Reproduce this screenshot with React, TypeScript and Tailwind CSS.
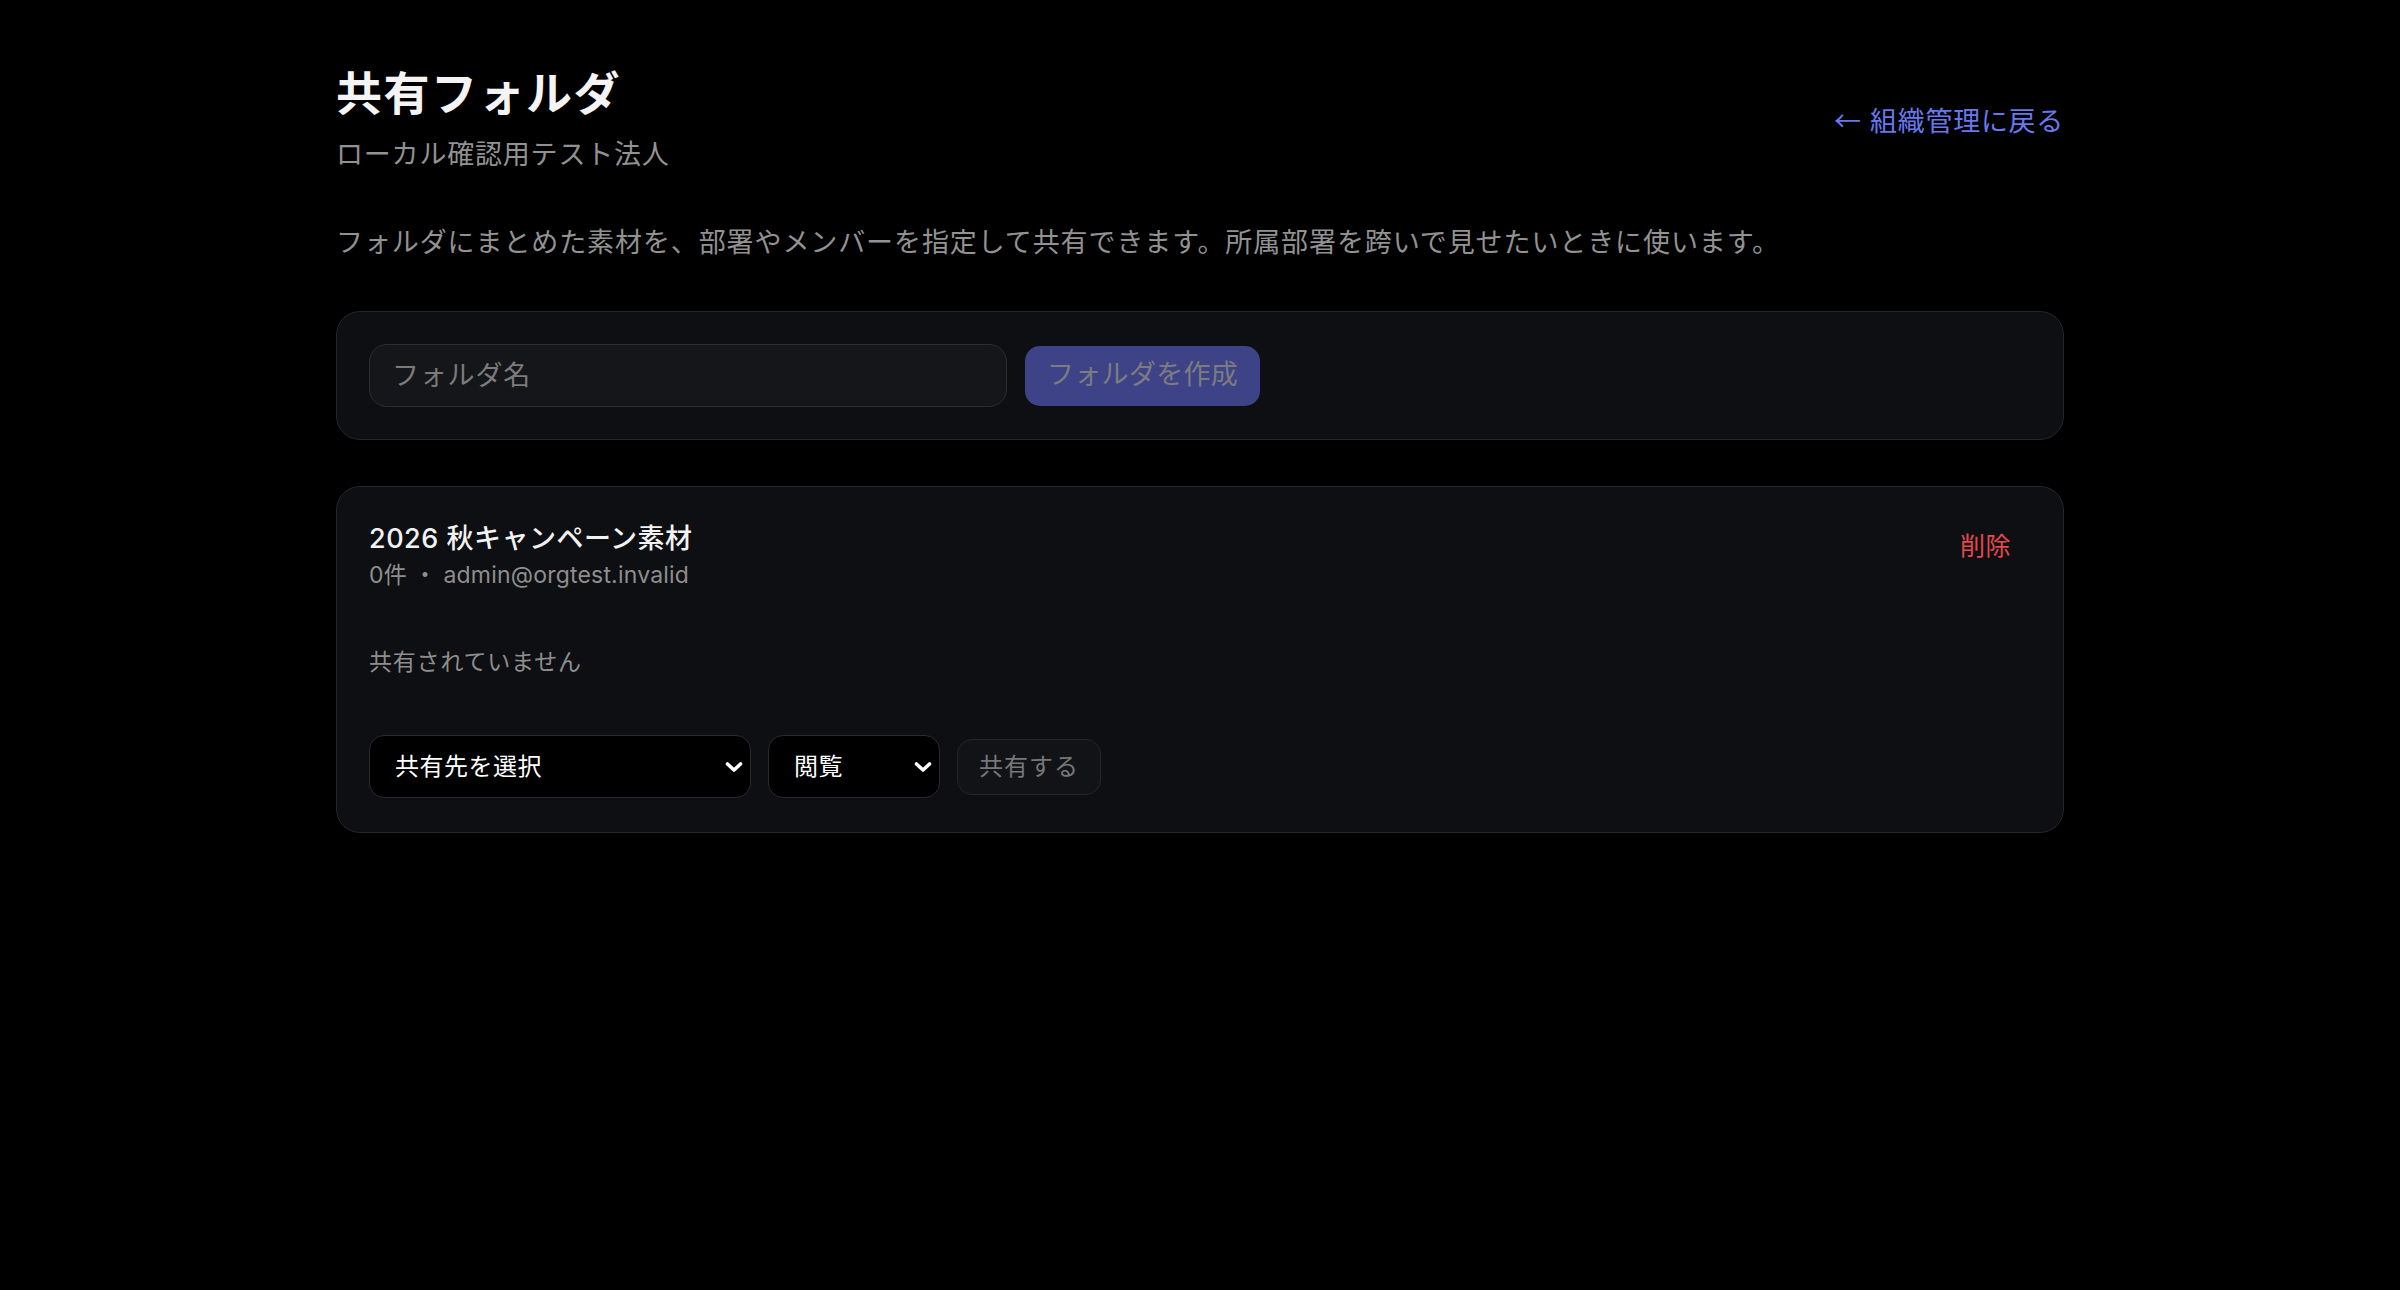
import * as React from 'react';

function Chevron() {
  return (
    <svg
      viewBox="0 0 18 11"
      className="pointer-events-none absolute right-[8px] top-1/2 h-[11px] w-[18px] -translate-y-1/2"
      fill="none"
      stroke="white"
      strokeWidth="3.6"
      strokeLinecap="round"
      strokeLinejoin="round"
    >
      <path d="M2.5 2.5 9 8.5 15.5 2.5" />
    </svg>
  );
}

function ShareSelect({
  width,
  options
}: {
  width: string;
  options: string[];
}) {
  return (
    <div className={`relative ${width}`}>
      <select className="h-[63px] w-full appearance-none rounded-[15px] border-[1.5px] border-[#2a2b2f] bg-black pl-[25px] pr-[36px] text-[24px] tracking-[0.5px] text-white outline-none">
        {options.map((o) => (
          <option key={o}>{o}</option>
        ))}
      </select>
      <Chevron />
    </div>
  );
}

export default function App() {
  return (
    <div className="min-h-screen bg-black font-['Inter','Noto_Sans_CJK_JP',sans-serif] text-white">
      <div className="mx-auto w-[1728px] pt-[66px]">
        <header className="flex items-center justify-between">
          <div>
            <h1 className="text-[46px] font-bold leading-[54px] tracking-[1.5px] text-[#f4f4f5]">
              共有フォルダ
            </h1>
            <p className="mt-[14px] text-[27px] leading-[42px] tracking-[0.8px] text-[#929292]">
              ローカル確認用テスト法人
            </p>
          </div>
          <a
            href="#"
            className="text-[27px] leading-[42px] tracking-[0.7px] text-[#6a78ee]"
          >
            <span className="font-['Noto_Sans_CJK_JP',sans-serif]">←</span> 組織管理に戻る
          </a>
        </header>

        <p className="mt-[46px] text-[27px] leading-[42px] tracking-[0.9px] text-[#929292]">
          フォルダにまとめた素材を、部署やメンバーを指定して共有できます。所属部署を跨いで見せたいときに使います。
        </p>

        {/* Create folder */}
        <section className="mt-[47px] flex items-center gap-[18px] rounded-[24px] border-[1.5px] border-[#25262a] bg-[#0e0f12] p-[32px]">
          <input
            placeholder="フォルダ名"
            className="h-[63px] w-[638px] rounded-[18px] border-[1.5px] border-[#2d2e33] bg-[#15161a] px-[22px] text-[27px] tracking-[0.8px] text-white outline-none placeholder:text-[#7b7b7b]"
          />
          <button
            disabled
            className="h-[60px] rounded-[15px] bg-[#3e4388] px-[22px] text-[27px] tracking-[0.3px] text-[#7c7c80]"
          >
            フォルダを作成
          </button>
        </section>

        {/* Folder list */}
        <section className="mt-[46px] rounded-[24px] border-[1.5px] border-[#25262a] bg-[#0e0f12] px-[32px] pb-[34px] pt-[32px]">
          <div className="flex items-start justify-between">
            <div>
              <h2 className="text-[27px] font-medium leading-[40px] tracking-[0.5px] text-[#f2f2f2]">
                2026 秋キャンペーン素材
              </h2>
              <p className="text-[23px] leading-[32px] tracking-[0.2px] text-[#8e8e8e]">
                0件 ・ admin@orgtest.invalid
              </p>
            </div>
            <button className="mr-[3px] rounded-[12px] px-[17px] py-[9px] text-[25px] leading-[36px] tracking-[0.5px] text-[#e5484d]">
              削除
            </button>
          </div>

          <p className="mt-[55px] text-[23px] leading-[32px] tracking-[0.8px] text-[#8e8e8e]">
            共有されていません
          </p>

          <div className="mt-[57px] flex items-center gap-[17px]">
            <ShareSelect width="w-[382px]" options={['共有先を選択']} />
            <ShareSelect width="w-[172px]" options={['閲覧', '編集']} />
            <button
              disabled
              className="h-[56px] rounded-[15px] border-[1.5px] border-[#25262a] bg-[#121316] px-[21px] text-[24px] tracking-[1px] text-[#77777a]"
            >
              共有する
            </button>
          </div>
        </section>
      </div>
    </div>
  );
}
